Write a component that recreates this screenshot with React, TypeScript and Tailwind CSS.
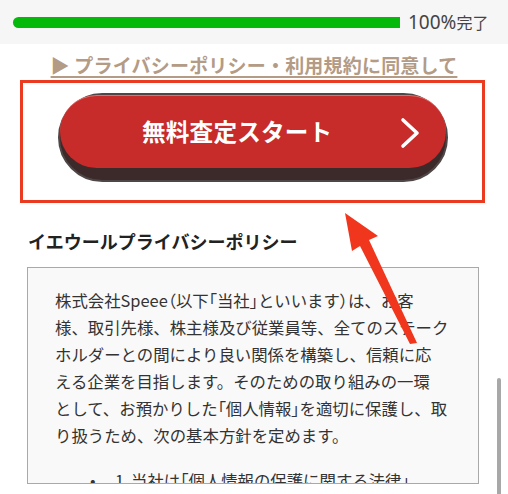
import React from "react";

const lines = [
  "株式会社Speee（以下「当社」といいます）は、お客",
  "様、取引先様、株主様及び従業員等、全てのステーク",
  "ホルダーとの間により良い関係を構築し、信頼に応",
  "える企業を目指します。そのための取り組みの一環",
  "として、お預かりした「個人情報」を適切に保護し、取",
  "り扱うため、次の基本方針を定めます。",
];

function Line({ text }: { text: string }) {
  const parts = text.split(/([（）「」])/);
  return (
    <div className="whitespace-nowrap">
      {parts.map((p, i) =>
        /^[（）「」]$/.test(p) ? (
          <span key={i} className="[font-feature-settings:'palt']">
            {p}
          </span>
        ) : (
          <React.Fragment key={i}>{p}</React.Fragment>
        )
      )}
    </div>
  );
}

export default function App() {
  return (
    <div className="relative w-[508px] h-[494px] overflow-hidden bg-white font-['Noto_Sans_CJK_JP',sans-serif] text-[#333]">
      {/* progress band */}
      <div className="h-[44px] bg-[#f6f6f6] flex items-center pl-[13px]">
        <div className="w-[387px] h-[11px] bg-[#05b90a] rounded-l-full" />
        <div className="ml-[8px] flex items-baseline text-[#444] leading-none">
          <span className="text-[19px] font-['Noto_Sans',sans-serif]">100%</span>
          <span className="text-[16px]">完了</span>
        </div>
      </div>

      {/* agreement link */}
      <div className="pt-[8px] flex justify-center">
        <span className="text-[19px] leading-[26px] font-bold text-[#b39b86] underline underline-offset-[3px] decoration-[1.5px] whitespace-nowrap tracking-[0.2px]">
          ▶ プライバシーポリシー・利用規約に同意して
        </span>
      </div>

      {/* highlighted button frame */}
      <div className="mt-[2px] ml-[20px] w-[465px] h-[123px] border-[3px] border-[#ea3a1f] pt-[10px] pl-[35px]">
        <div className="w-[390px] h-[89px] rounded-full bg-[#3c2a2a] border-2 border-[#4f4747] pb-[12px]">
          <div className="relative h-[73px] rounded-full bg-[#c72b2a] border-t border-[#e0706a] flex items-center pl-[82px] pr-[26px]">
            <span className="text-[23.6px] font-bold text-white leading-none tracking-[0.2px] whitespace-nowrap">
              無料査定スタート
            </span>
            <div className="flex-1" />
            <svg width="20" height="32" viewBox="0 0 20 32" className="mt-[2px]">
              <path d="M3 3 L17 16 L3 29" fill="none" stroke="white" strokeWidth="3.6" strokeLinecap="round" strokeLinejoin="round" />
            </svg>
          </div>
        </div>
      </div>

      {/* heading */}
      <h2 className="mt-[25px] ml-[28px] text-[18px] leading-[26px] font-bold text-[#222]">
        イエウールプライバシーポリシー
      </h2>

      {/* policy box */}
      <div className="mt-[13px] ml-[27px] w-[452px] h-[217px] overflow-hidden border border-[#a9a9a9] bg-[#f9f9f9] pt-[19px] pl-[27px]">
        <div className="text-[16.4px] leading-[27px] text-[#333]">
          {lines.map((l, i) => (
            <Line key={i} text={l} />
          ))}
        </div>
        <div className="mt-[18px] flex text-[16.4px] leading-[27px] whitespace-nowrap">
          <span className="ml-[35px] w-[25px]">•</span>
          <span className="w-[16px]">1</span>
          <Line text="当社は「個人情報の保護に関する法律」" />
        </div>
      </div>

      {/* scrollbar */}
      <div className="absolute left-[497px] top-[378px] w-[4px] h-[130px] rounded-full bg-[#a8a8a8]" />

      {/* annotation arrow */}
      <svg className="absolute left-0 top-0 pointer-events-none" width="508" height="494">
        <polygon
          points="345,213 378,236 369,240 417,343 410,344 360,246 352,251"
          fill="#f0361d"
        />
      </svg>
    </div>
  );
}
